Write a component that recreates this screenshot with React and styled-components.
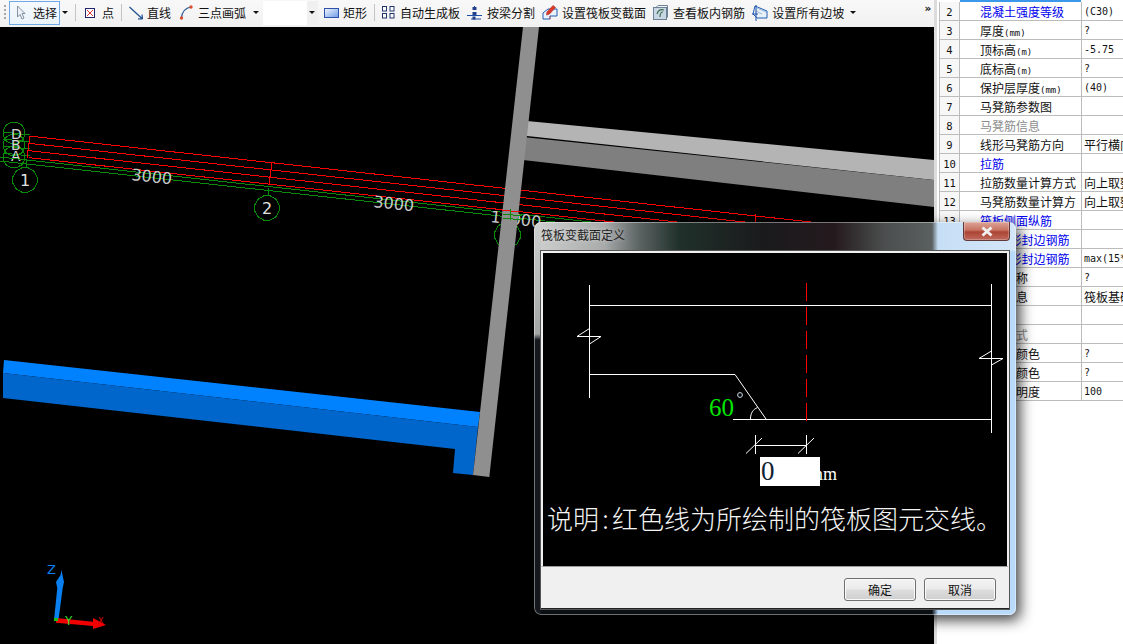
import React from "react";
import styled, { createGlobalStyle } from "styled-components";

const CJK = '"Noto Sans CJK SC", "Liberation Sans", sans-serif';
const MONO = '"DejaVu Sans Mono", "Liberation Mono", monospace';

const Global = createGlobalStyle`
  html, body { margin: 0; padding: 0; background: #fff; overflow: hidden; }
  * { box-sizing: border-box; }
`;

const Screen = styled.div`
  position: relative;
  width: 1123px;
  height: 644px;
  display: flex;
  overflow: hidden;
  font-family: ${CJK};
  font-size: 12px;
  color: #111;
`;
const Main = styled.div`
  width: 934px;
  display: flex;
  flex-direction: column;
`;
const Toolbar = styled.div`
  height: 27px;
  display: flex;
  align-items: center;
  gap: 7px;
  padding: 0 4px 2px 4px;
  background: linear-gradient(#f8f8f8, #f1f1f1);
  white-space: nowrap;
`;
const Grip = styled.div`
  width: 2px;
  height: 15px;
  margin-right: -6px;
  background: repeating-linear-gradient(#a8a8a8 0 2px, transparent 2px 4px);
`;
const SelectButton = styled.div`
  width: 51px;
  height: 24px;
  margin-left: 2px;
  display: flex;
  align-items: center;
  gap: 7px;
  padding-left: 6px;
  border: 1px solid #6ea8e6;
  background: linear-gradient(#f6fafe, #eaf3fc);
`;
const ToolItem = styled.div`
  display: flex;
  align-items: center;
  gap: ${(p) => p.$gap ?? 5}px;
  margin-left: ${(p) => p.$ml ?? 0}px;
  line-height: 16px;
`;
const Caret = styled.span`
  width: 0;
  height: 0;
  margin-left: ${(p) => p.$ml ?? 0}px;
  border-left: 3px solid transparent;
  border-right: 3px solid transparent;
  border-top: 3px solid #111;
`;
const Sep = styled.div`
  width: 1px;
  height: 17px;
  background: #c4c4c4;
`;
const Combo = styled.div`
  width: 55px;
  height: 24px;
  margin-left: -3px;
  display: flex;
  align-items: center;
  justify-content: flex-end;
  padding-right: 3px;
  background: linear-gradient(90deg, #fff 0 44px, #f0f0f0 44px);
`;
const Chevrons = styled.div`
  margin-left: auto;
  margin-right: 1px;
  margin-top: -8px;
  font: bold 11px/12px ${MONO};
  letter-spacing: -2px;
`;
const Canvas = styled.svg`
  display: block;
  flex: 1;
  width: 934px;
  background: #000;
`;

const Panel = styled.div`
  flex: 1;
  border-left: 3px solid #dcdcdc;
  padding-left: 2px;
  background: #fff;
  overflow: hidden;
`;
const ActiveStrip = styled.div`
  height: 2px;
  width: 121px;
  margin-left: 21px;
  background: #3c98ea;
`;
const Row = styled.div`
  display: flex;
  height: 19px;
  width: 240px;
  border-bottom: 1px solid #bcbcbc;
  line-height: 20px;
  overflow: hidden;
`;
const Num = styled.div`
  width: 21px;
  border-left: 1px solid #bcbcbc;
  border-right: 1px solid #bcbcbc;
  background: #f7f7f7;
  text-align: center;
  font: 10.5px/20px ${MONO};
`;
const Name = styled.div`
  width: 122px;
  padding-left: 20px;
  border-right: 1px solid #bcbcbc;
  overflow: hidden;
  white-space: nowrap;
  color: ${(p) => (p.$tone === "link" ? "#0000ee" : p.$tone === "off" ? "#8c8c8c" : "#111")};
`;
const Unit = styled.span`
  font: 9px ${MONO};
`;
const Value = styled.div`
  flex: 1;
  padding-left: 2px;
  white-space: nowrap;
  font: ${(p) => (p.$latin ? `10px/20px ${MONO}` : `12px/20px ${CJK}`)};
`;

const Dialog = styled.div`
  position: absolute;
  left: 534px;
  top: 222px;
  width: 482px;
  height: 393px;
  padding: 0 7px 6px;
  display: flex;
  flex-direction: column;
  border-radius: 7px;
  background:
    linear-gradient(180deg, #cfd0d0 0, #a4a6a6 112px, #14181c 118px) left top / 7px 100% no-repeat,
    linear-gradient(90deg, #cfcfcf 0, #a9abab 70px, #5d6464 105px, #20302a 145px, #1a1a1c 230px, #241a1e 300px, #4b4e4e 350px, #5a5f60 398px, #c6def5 404px, #d4e6f8 100%) left top / 100% 29px no-repeat,
    linear-gradient(90deg, #0b0e12 0, #0b0e12 398px, #b9dafb 404px, #b9dafb 100%);
  box-shadow: inset 0 0 0 1px rgba(255, 255, 255, 0.4), 4px 5px 14px rgba(0, 0, 0, 0.75);
`;
const TitleBar = styled.div`
  height: 29px;
  flex: none;
  display: flex;
  justify-content: space-between;
  align-items: flex-start;
`;
const Title = styled.div`
  line-height: 26px;
  color: #222;
  text-shadow: 0 0 4px rgba(255, 255, 255, 0.5);
`;
const CloseButton = styled.div`
  width: 47px;
  height: 19px;
  margin-right: -1px;
  display: flex;
  align-items: center;
  justify-content: center;
  border: 1px solid #5f3a38;
  border-top: none;
  border-radius: 0 0 4px 4px;
  background: linear-gradient(#dca598 0, #c97362 45%, #ab4434 55%, #bf6a5c 100%);
  box-shadow: inset 0 0 0 1px rgba(255, 255, 255, 0.25);
`;
const Client = styled.div`
  flex: 1;
  display: flex;
  flex-direction: column;
  box-shadow: 0 0 0 1px #555;
`;
const Stage = styled.div`
  position: relative;
  height: 316px;
  flex: none;
  background: #000;
  border: 2px solid #f0f0f0;
  border-bottom: 1px solid #9a9a9a;
`;
const Drawing = styled.svg`
  display: block;
`;
const WidthInput = styled.input`
  position: absolute;
  left: 217px;
  top: 204px;
  width: 60px;
  height: 29px;
  padding: 0 0 0 1px;
  border: none;
  outline: none;
  background: #fff;
  color: #123;
  font: 27px/29px "Liberation Serif", serif;
`;
const Note = styled.div`
  height: 40px;
  padding-left: 4px;
  color: #f4f4f4;
  font: 300 26px/30px ${CJK};
  white-space: nowrap;
`;
const NoteColon = styled.span`
  display: inline-block;
  width: 13px;
  text-align: center;
`;
const Footer = styled.div`
  flex: 1;
  display: flex;
  justify-content: flex-end;
  gap: 8px;
  padding: 11px 13px 0 0;
  background: #f0f0f0;
  border-bottom: 1px solid #222;
`;
const Button = styled.div`
  width: 72px;
  height: 23px;
  border: 1px solid #707070;
  border-radius: 3px;
  text-align: center;
  line-height: 21px;
  background: linear-gradient(#f3f3f3 0, #ebebeb 48%, #dddddd 52%, #cfcfcf 100%);
  box-shadow: inset 0 0 0 1px #fafafa;
`;

const Icon = ({ w, h = 16, children, mt = 0 }) => (
  <svg width={w} height={h} viewBox={`0 0 ${w} ${h}`} style={{ flex: "none", marginTop: mt }}>
    {children}
  </svg>
);

const rows = [
  [2, "混凝土强度等级", "link", "(C30)", true],
  [3, <>厚度<Unit>(mm)</Unit></>, "", "?", true],
  [4, <>顶标高<Unit>(m)</Unit></>, "", "-5.75", true],
  [5, <>底标高<Unit>(m)</Unit></>, "", "?", true],
  [6, <>保护层厚度<Unit>(mm)</Unit></>, "", "(40)", true],
  [7, "马凳筋参数图", "", "", false],
  [8, "马凳筋信息", "off", "", false],
  [9, "线形马凳筋方向", "", "平行横向", false],
  [10, "拉筋", "link", "", false],
  [11, "拉筋数量计算方式", "", "向上取整", false],
  [12, "马凳筋数量计算方", "", "向上取整", false],
  [13, "筏板侧面纵筋", "link", "", false],
  [14, <>上部<Unit>U</Unit>形封边钢筋</>, "link", "", false],
  [15, <>下部<Unit>U</Unit>形封边钢筋</>, "link", "max(15*", true],
  [16, "构件名称", "", "?", true],
  [17, "汇总信息", "", "筏板基础", false],
  [18, "备注", "", "", false],
  [19, "显示样式", "off", "", false],
  [20, "顶面板颜色", "", "?", true],
  [21, "底面板颜色", "", "?", true],
  [22, "材质透明度", "", "100", true],
];

const RED = "#ff0000";
const GREEN = "#0a8a0a";
const polyRound = (cx, cy, r, n = 12) =>
  Array.from({ length: n }, (_, i) => {
    const a = (i * 2 * Math.PI) / n + Math.PI / n;
    return `${(cx + r * Math.cos(a)).toFixed(1)},${(cy + r * Math.sin(a)).toFixed(1)}`;
  }).join(" ");

const redY = [136, 143.3, 150.7, 157.7];
const dimText = { fontFamily: "DejaVu Sans, sans-serif", fontSize: 16, fill: "#c8c8c8" };

function Scene() {
  return (
    <Canvas viewBox="0 27 934 617">
      <polygon points="4,360 480,412 478,427 3,373" fill="#0082ff" />
      <polygon points="3,373 478,427 473,475 453,473 455,449 3,398" fill="#0066cc" />
      <polygon points="527,121 934,160 934,180 527,136" fill="#b4b4b4" />
      <polygon points="523,137 934,180 934,207 523,160" fill="#7f7f7f" />

      <g fill="none" stroke={GREEN} shapeRendering="crispEdges">
        <polygon points={polyRound(14, 133, 11)} />
        <polygon points={polyRound(14, 145, 11)} />
        <polygon points={polyRound(14, 157, 11)} />
        <polygon points={polyRound(25, 180, 12.5)} />
        <polygon points={polyRound(267, 208, 12.5)} />
        <polygon points={polyRound(507.5, 235, 13)} />
        <line x1="26" y1="160" x2="26" y2="168" />
        <line x1="268" y1="188" x2="268" y2="196" />
        {[135, 142, 149, 156].map((y) => (
          <line key={y} x1="3" y1={y - 3} x2="30" y2={y} />
        ))}
      </g>
      <g fontFamily="DejaVu Sans, sans-serif" fontSize="14" fill="#d4d4d4">
        <text x="11" y="139">D</text>
        <text x="11" y="150">B</text>
        <text x="11" y="161">A</text>
      </g>
      <text x="20" y="186" {...dimText} fill="#e0e0e0">1</text>
      <text x="262" y="214" {...dimText} fill="#e0e0e0">2</text>

      <g stroke={RED} shapeRendering="crispEdges">
        {redY.map((y) => (
          <line key={y} x1="29" y1={y} x2="820" y2={y + 791 * 0.11} />
        ))}
        <line x1="30" y1="136" x2="27" y2="158" />
        <line x1="272" y1="162" x2="269" y2="184" />
        <line x1="755" y1="214" x2="755" y2="222" />
      </g>
      <g stroke={GREEN} shapeRendering="crispEdges">
        <line x1="0" y1="157" x2="600" y2="223" />
        <line x1="0" y1="161" x2="600" y2="227" />
      </g>
      <text x="131" y="180" {...dimText} transform="rotate(6.3 131 180)">3000</text>
      <text x="373" y="207" {...dimText} transform="rotate(6.3 373 207)">3000</text>
      <text x="490" y="222" {...dimText} transform="rotate(6.3 490 222)">13000</text>

      <polygon points="523,27 539,27 489.3,477 473,475" fill="#8f8f8f" />

      <g shapeRendering="crispEdges">
        <line x1="502" y1="210" x2="520" y2="212" stroke={RED} />
        <line x1="503" y1="214" x2="522" y2="216" stroke={GREEN} />
        <line x1="503" y1="218" x2="522" y2="220" stroke={GREEN} />
        <line x1="510" y1="209" x2="510" y2="220" stroke={GREEN} />
      </g>

      <g>
        <polygon points="54,620 58.5,620 62.7,588 64,582 62.5,575 61.5,570 60.5,575 56,582 57.3,588" fill="#0a7ff0" />
        <path d="M56 618 L93 621.7 L93 618 L106 625 L93 629 L93 626 L56 622.7 Z" fill="#f00000" />
        <rect x="54" y="618" width="4" height="3" fill="#19c219" />
        <text x="47" y="574" fontFamily="DejaVu Sans, sans-serif" fontSize="13" fill="#0a7ff0">Z</text>
        <text x="65" y="625" fontFamily="DejaVu Sans, sans-serif" fontSize="12" fill="#36d936">Y</text>
        <text x="98" y="624" fontFamily="DejaVu Sans, sans-serif" fontSize="8" fill="#e00000">X</text>
      </g>
    </Canvas>
  );
}

function SectionDrawing() {
  return (
    <Drawing width="464" height="250" viewBox="543 253 464 250">
      <g stroke="#fff" fill="none" shapeRendering="crispEdges">
        <line x1="589.5" y1="285" x2="589.5" y2="398" />
        <line x1="590" y1="305.5" x2="991" y2="305.5" />
        <line x1="991.5" y1="284" x2="991.5" y2="433" />
        <line x1="590" y1="374.5" x2="735" y2="374.5" />
        <line x1="733" y1="419.5" x2="991" y2="419.5" />
        <line x1="577" y1="336.5" x2="601" y2="336.5" />
        <line x1="979" y1="358.5" x2="1003" y2="358.5" />
        <line x1="755.5" y1="435" x2="755.5" y2="454" />
        <line x1="806.5" y1="435" x2="806.5" y2="454" />
        <line x1="756" y1="445.5" x2="807" y2="445.5" />
      </g>
      <g stroke="#fff" fill="none">
        <line x1="735" y1="374.5" x2="766" y2="419" />
        <path d="M750.5 419 C750.5 413 753 409.5 757.5 407.5" />
        <line x1="577" y1="336.5" x2="589.5" y2="328.5" />
        <line x1="601" y1="336.5" x2="589.5" y2="344" />
        <line x1="979" y1="358.5" x2="991.5" y2="351" />
        <line x1="1003" y1="358.5" x2="991.5" y2="365" />
        <line x1="746" y1="453.5" x2="762" y2="438" />
        <line x1="798" y1="453.5" x2="814" y2="438" />
      </g>
      <line x1="806.5" y1="283" x2="806.5" y2="421" stroke="#ff0000" strokeWidth="1.4" strokeDasharray="18 6" shapeRendering="crispEdges" />
      <text x="709" y="416" fontFamily="Liberation Serif, serif" fontSize="25" fill="#00e800">60</text>
      <circle cx="740" cy="395" r="2.4" fill="none" stroke="#cfe2f2" />
      <text x="809" y="480" fontFamily="Liberation Serif, serif" fontSize="18" fill="#fff">mm</text>
    </Drawing>
  );
}

export default function App() {
  return (
    <Screen>
      <Global />
      <Main>
        <Toolbar>
          <Grip />
          <SelectButton>
            <Icon w={10} h={15}>
              <path d="M1.5 1 L1.5 12 L4 9.5 L6 14 L8 13 L6 8.5 L9 8.5 Z" fill="#eef2f6" stroke="#8492a4" />
            </Icon>
            选择
          </SelectButton>
          <Caret $ml={-5} />
          <Sep />
          <ToolItem $ml={2} $gap={7}>
            <Icon w={10} h={12}>
              <rect x="0.5" y="1.5" width="9" height="9" fill="#fff" stroke="#24246e" />
              <path d="M2 3 L8 9 M8 3 L2 9" stroke="#d33" />
            </Icon>
            点
          </ToolItem>
          <Sep />
          <ToolItem $gap={4}>
            <Icon w={14} h={14}>
              <path d="M0.5 1 L13 12.5 M13.5 13 L13 8.5 M13.5 13 L9 12.8" stroke="#1d4d8e" strokeWidth="1.2" fill="none" />
            </Icon>
            直线
          </ToolItem>
          <ToolItem $ml={1}>
            <Icon w={14} h={15}>
              <path d="M2.5 13 C3 7 6 3 12 2" stroke="#25578f" strokeWidth="1.2" fill="none" />
              <circle cx="2.5" cy="13" r="1.7" fill="#d8502c" />
              <circle cx="12" cy="2" r="1.7" fill="#d8502c" />
            </Icon>
            三点画弧
          </ToolItem>
          <Caret />
          <Combo>
            <Caret />
          </Combo>
          <ToolItem $ml={-1} $gap={4}>
            <Icon w={15} h={12}>
              <defs>
                <linearGradient id="rectFill" x1="0" y1="0" x2="1" y2="1">
                  <stop offset="0" stopColor="#f4f8ff" />
                  <stop offset="1" stopColor="#6d9ae4" />
                </linearGradient>
              </defs>
              <rect x="0.5" y="1.5" width="14" height="9" fill="url(#rectFill)" stroke="#2c52ac" />
            </Icon>
            矩形
          </ToolItem>
          <Sep />
          <ToolItem>
            <Icon w={13} h={13}>
              {[0, 7.5].map((x) =>
                [0.5, 7.5].map((y) => (
                  <rect key={`${x}${y}`} x={x + 0.5} y={y} width="4" height="4.5" fill="#fff" stroke="#23356e" />
                ))
              )}
            </Icon>
            自动生成板
          </ToolItem>
          <ToolItem>
            <Icon w={15} h={14}>
              <path d="M7.5 0 V4 M0 9.5 H15 M4 13 H14" stroke="#1c4fa8" fill="none" />
              <rect x="5.5" y="1" width="4" height="3" fill="#24408c" />
              <rect x="5.5" y="6" width="4" height="3" fill="#24408c" />
              <rect x="5.5" y="10.5" width="3" height="3" fill="#24408c" />
            </Icon>
            按梁分割
          </ToolItem>
          <ToolItem $gap={4}>
            <Icon w={16} h={17}>
              <path d="M1 15 V9 L6 5 H15 V12 H8 V15 Z" fill="#eaf2fc" stroke="#1f5fb4" />
              <path d="M5 8 L11 1.5 L13.5 3.5 L7.5 10 L4.5 11 Z" fill="#dd3a2a" stroke="#a52018" strokeWidth="0.6" />
              <line x1="8" y1="12" x2="8" y2="16" stroke="#d33" strokeDasharray="1 1" />
            </Icon>
            设置筏板变截面
          </ToolItem>
          <ToolItem>
            <Icon w={15} h={15}>
              <rect x="0.5" y="2.5" width="13" height="12" fill="#c8d6e4" stroke="#6c8098" />
              <path d="M3 2.5 L5 0.5 H14.5 V12 L13.5 13" fill="none" stroke="#6c8098" />
              <path d="M4 9 C5 5 8 4 11 5 M7 12 C7 9 8 7 10 7" stroke="#3b6e4c" strokeWidth="1.2" fill="none" />
            </Icon>
            查看板内钢筋
          </ToolItem>
          <ToolItem $gap={4}>
            <Icon w={16} h={16}>
              <path d="M3 1 L15 6 V13 H5 L1 9 Z" fill="#e8f0f8" stroke="#1f5fb4" />
              <path d="M5 3 L14 7 M4 6 L10 9" stroke="#9bb6d6" fill="none" />
              <path d="M4 0 V16 M0 9 H6" stroke="#1c4fa8" fill="none" />
            </Icon>
            设置所有边坡
          </ToolItem>
          <Caret $ml={-1} />
          <Chevrons>»</Chevrons>
        </Toolbar>
        <Scene />
      </Main>

      <Panel>
        <ActiveStrip />
        {rows.map(([n, label, tone, value, latin]) => (
          <Row key={n}>
            <Num>{n}</Num>
            <Name $tone={tone}>{label}</Name>
            <Value $latin={latin}>{value}</Value>
          </Row>
        ))}
      </Panel>

      <Dialog>
        <TitleBar>
          <Title>筏板变截面定义</Title>
          <CloseButton>
            <svg width="14" height="11" viewBox="0 0 14 11">
              <path d="M2.5 1.5 L11.5 9.5 M11.5 1.5 L2.5 9.5" stroke="#f0f0f0" strokeWidth="3" />
            </svg>
          </CloseButton>
        </TitleBar>
        <Client>
          <Stage>
            <SectionDrawing />
            <WidthInput readOnly value="0" />
            <Note>
              说明<NoteColon>:</NoteColon>红色线为所绘制的筏板图元交线。
            </Note>
          </Stage>
          <Footer>
            <Button>确定</Button>
            <Button>取消</Button>
          </Footer>
        </Client>
      </Dialog>
    </Screen>
  );
}
